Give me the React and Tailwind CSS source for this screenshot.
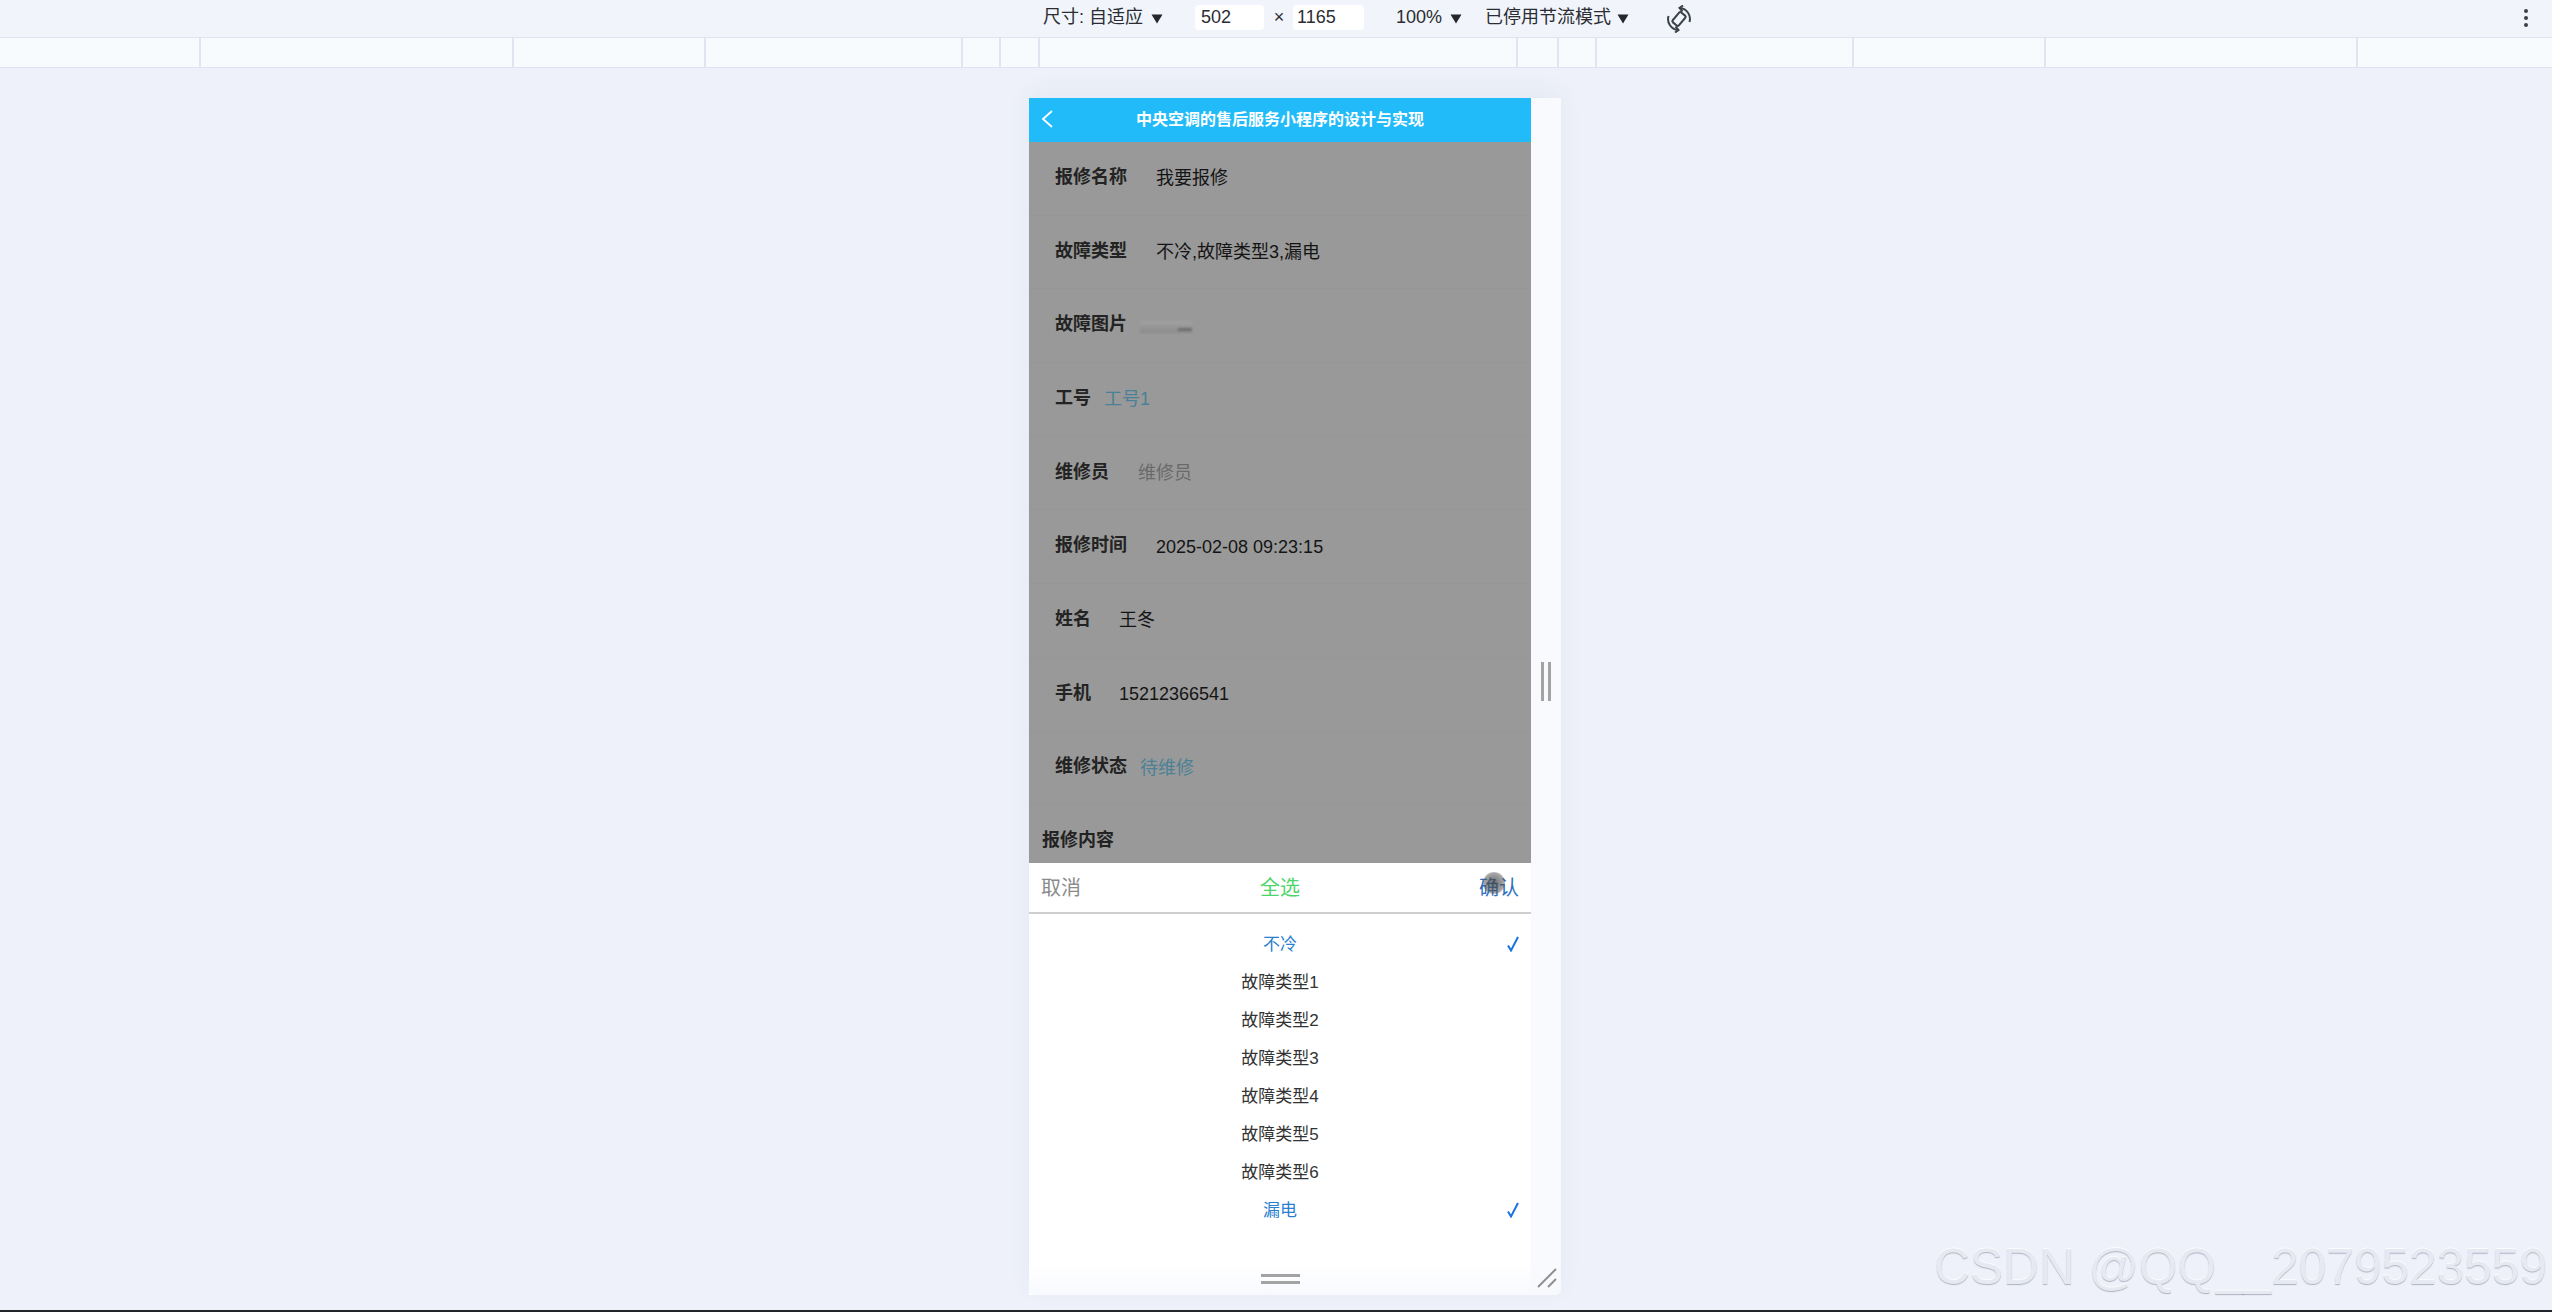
import React from 'react';

const rows = [
  { label: '报修名称', value: '我要报修', gap: 'ml-[29px]', color: 'text-[#141414]' },
  { label: '故障类型', value: '不冷,故障类型3,漏电', gap: 'ml-[29px]', color: 'text-[#141414]' },
  { label: '故障图片', image: true, gap: 'ml-[13px]' },
  { label: '工号', value: '工号1', gap: 'ml-[13px]', color: 'text-[#4a8196]' },
  { label: '维修员', value: '维修员', gap: 'ml-[29px]', color: 'text-[#6a6a6a]' },
  { label: '报修时间', value: '2025-02-08 09:23:15', gap: 'ml-[29px]', color: 'text-[#141414]' },
  { label: '姓名', value: '王冬', gap: 'ml-[28px]', color: 'text-[#141414]' },
  { label: '手机', value: '15212366541', gap: 'ml-[28px]', color: 'text-[#141414]' },
  { label: '维修状态', value: '待维修', gap: 'ml-[13px]', color: 'text-[#4a8196]' },
];

const options = [
  { name: '不冷', on: true },
  { name: '故障类型1' },
  { name: '故障类型2' },
  { name: '故障类型3' },
  { name: '故障类型4' },
  { name: '故障类型5' },
  { name: '故障类型6' },
  { name: '漏电', on: true },
];

const ticks = ['w-[201px]', 'w-[313px]', 'w-[192px]', 'w-[257px]', 'w-[38px]', 'w-[39px]', 'w-[478px]', 'w-[41px]', 'w-[38px]', 'w-[257px]', 'w-[192px]', 'w-[312px]', 'flex-1'];

const Caret = () => (
  <svg viewBox="0 0 12 10" className="w-[12px] h-[10px] mt-[3px] fill-[#23262b]">
    <path d="M0.5 0.5h11L6 9.5z" />
  </svg>
);

const RotateIcon = () => (
  <svg viewBox="0 0 26 28" className="w-[26px] h-[28px] fill-none stroke-[#3c4047]">
    <rect x="9" y="7.500" width="8" height="13" rx="1.500" strokeWidth="2" transform="rotate(40 13 14)" />
    <path d="M14 3A11 11 0 0 1 23.500 17" strokeWidth="2" />
    <path d="M12 25A11 11 0 0 1 2.500 11" strokeWidth="2" />
    <path d="M17 0.500L13.500 3L16.500 6.500M9 27.500L12.500 25L9.500 21.500" strokeWidth="2" />
  </svg>
);

const App = () => {
  return (
    <div className="relative w-[2552px] h-[1312px] overflow-hidden flex flex-col bg-[#eef1fa] font-['Liberation_Sans','Noto_Sans_CJK_SC',sans-serif]">

      {/* Device toolbar */}
      <div className="h-[37px] flex items-center bg-[#f1f4fa] text-[18px] text-[#2a2d33] pb-[2px]">
        <span className="ml-[1043px]">尺寸: 自适应</span>
        <span className="ml-[8px]"><Caret /></span>
        <span className="ml-[32px] w-[69px] h-[25px] bg-white rounded-[4px] pl-[6px] leading-[25px]">502</span>
        <span className="ml-[5px] w-[20px] text-center">×</span>
        <span className="ml-[4px] w-[71px] h-[25px] bg-white rounded-[4px] pl-[4px] leading-[25px]">1165</span>
        <span className="ml-[32px]">100%</span>
        <span className="ml-[8px]"><Caret /></span>
        <span className="ml-[23px]">已停用节流模式</span>
        <span className="ml-[6px]"><Caret /></span>
        <span className="ml-[37px] mt-[2px]"><RotateIcon /></span>
        <span className="ml-auto mr-[24px] flex flex-col gap-[3px]">
          <i className="w-[4px] h-[4px] rounded-full bg-[#3c4047]" />
          <i className="w-[4px] h-[4px] rounded-full bg-[#3c4047]" />
          <i className="w-[4px] h-[4px] rounded-full bg-[#3c4047]" />
        </span>
      </div>

      {/* Media query bar */}
      <div className="h-[31px] flex bg-[#f8fbfe] border-y border-[#dfe4f0]">
        {ticks.map((w, i) => (
          <div key={i} className={`${w} border-r-2 border-[#e0e5f1] last:border-r-0`} />
        ))}
      </div>

      {/* Emulated device */}
      <div className="flex-1 pt-[30px] pl-[1029px]">
        <div className="flex w-[532px] h-[1197px] rounded-b-[6px] bg-[#f8fafe] shadow-[0_-6px_24px_rgba(60,70,100,0.05)]">
          <div className="w-[502px] flex flex-col">
            <div className="h-[44px] shrink-0 relative flex items-center justify-center bg-[#22bbf9] text-white text-[16px] font-bold">
              <svg viewBox="0 0 12 18" className="absolute left-[12px] top-[12px] w-[12px] h-[18px] fill-none stroke-white stroke-[1.8]">
                <path d="M11 1L2 9l9 8" />
              </svg>
              中央空调的售后服务小程序的设计与实现
            </div>

            <div className="h-[721px] shrink-0 bg-[#999999] overflow-hidden">
              {rows.map((row) => (
                <div key={row.label} className="h-[73.7px] pl-[26px] pb-[2px] flex items-center text-[18px] border-b border-[#969696]">
                  <span className="font-bold text-[#232323]">{row.label}</span>
                  {row.image ? (
                    <span className={`${row.gap} relative w-[52px] h-[12px] mt-[4px] bg-linear-to-b from-[#a2a2a2] to-[#8a8a8a] blur-[1px]`}>
                      <i className="absolute right-0 bottom-[2px] w-[14px] h-[3px] bg-[#6e6e6e]" />
                    </span>
                  ) : (
                    <span className={`${row.gap} ${row.color} mt-[3px]`}>{row.value}</span>
                  )}
                </div>
              ))}
              <div className="pl-[13px] pt-[22px] text-[18px] font-bold text-[#232323]">报修内容</div>
            </div>

            {/* Multi select picker */}
            <div className="flex-1 bg-white flex flex-col">
              <div className="h-[51px] shrink-0 flex items-center justify-between pl-[12px] pr-[12px] text-[20px] border-b-2 border-[#cfcfcf]">
                <span className="text-[#8a8a8a]">取消</span>
                <span className="text-[#4cd56a]">全选</span>
                <span className="text-[#2a6ebd]">确认</span>
              </div>
              <div className="pt-[12px]">
                {options.map((opt) => (
                  <div key={opt.name} className={`relative h-[38px] flex items-center justify-center text-[17px] ${opt.on ? 'text-[#2b7fd0]' : 'text-[#333333]'}`}>
                    {opt.name}
                    {opt.on && (
                      <svg viewBox="0 0 12 16" className="absolute right-[12px] top-[10px] w-[12px] h-[16px] fill-none stroke-[#1a73e0] stroke-[2]">
                        <path d="M1 9.500L4 14.500L11 1" />
                      </svg>
                    )}
                  </div>
                ))}
              </div>
            </div>
          </div>

          {/* Side resize handle */}
          <div className="flex-1 flex items-center justify-center pb-[30px]">
            <div className="flex gap-[4px]">
              <i className="w-[3px] h-[39px] bg-[#a3a3a3]" />
              <i className="w-[3px] h-[39px] bg-[#a3a3a3]" />
            </div>
          </div>
        </div>
      </div>

      {/* Bottom resize handle and window edge */}
      <div className="absolute left-[1029px] top-[1265px] w-[532px] h-[30px] rounded-b-[6px] bg-linear-to-b from-white/0 to-[#f7f9fd] flex items-center justify-center pb-[2px]">
        <div className="flex flex-col gap-[4px] mt-[-1px] mr-[30px]">
          <i className="block w-[39px] h-[3px] bg-[#a3a3a3]" />
          <i className="block w-[39px] h-[3px] bg-[#a3a3a3]" />
        </div>
        <svg viewBox="0 0 20 20" className="absolute right-[4px] top-[3px] w-[20px] h-[20px] stroke-[#8f8f8f] stroke-[2]">
          <path d="M1 19L19 1M11 19L19 11" />
        </svg>
      </div>

      {/* Emulated touch cursor */}
      <div className="absolute left-[1483px] top-[872px] w-[22px] h-[22px] rounded-full bg-[radial-gradient(circle,rgba(60,60,60,0.75),rgba(90,90,90,0.55)_60%,rgba(120,120,120,0))]" />

      {/* Watermark */}
      <div className="absolute right-[5px] top-[1239px] text-[49.6px] leading-[57px] whitespace-nowrap text-[#e6e9f2] [text-shadow:0_1px_1px_rgba(120,125,140,0.55),0_-1px_0_rgba(255,255,255,0.8)]">
        CSDN @QQ__2079523559
      </div>

      <div className="absolute left-0 right-0 bottom-0 h-[2px] bg-[#23252b]" />
    </div>
  );
};

export default App;
